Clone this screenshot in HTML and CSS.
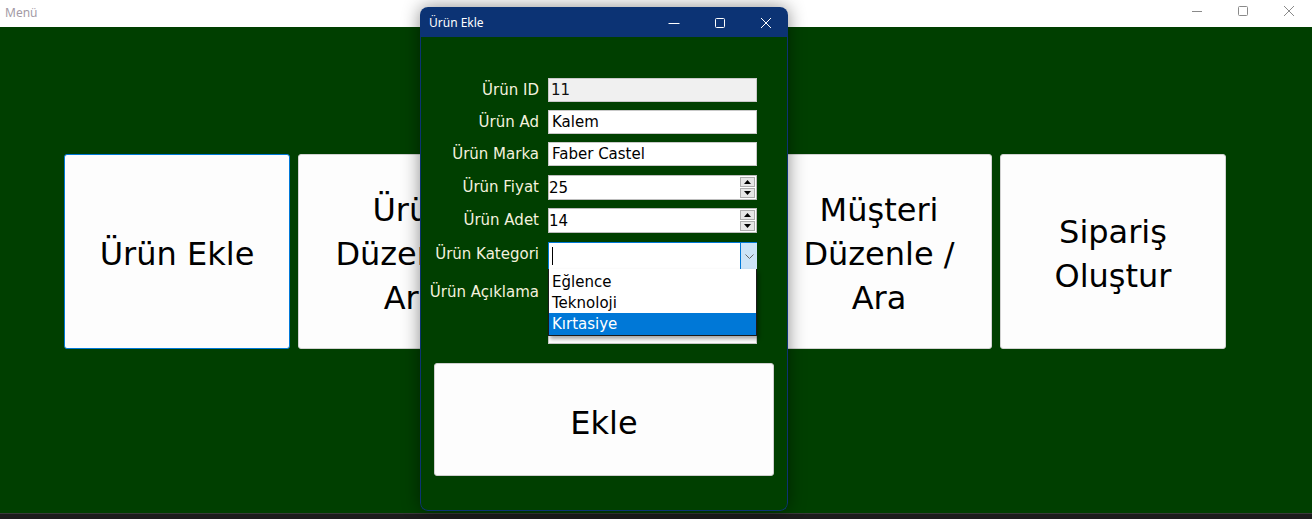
FILE: index.html
```html
<!DOCTYPE html>
<html lang="tr">
<head>
<meta charset="utf-8">
<title>Menü</title>
<link rel="stylesheet" href="styles.css">
</head>
<body>
<div class="app">
  <header class="titlebar">
    <span class="title">Menü</span>
    <div class="controls">
      <span class="ctl"><svg width="12" height="12" viewBox="0 0 12 12"><path d="M1 6.5h10" stroke="#8a8a8a" stroke-width="1"/></svg></span>
      <span class="ctl"><svg width="12" height="12" viewBox="0 0 12 12"><rect x="1.5" y="1.5" width="9" height="9" rx="1" fill="none" stroke="#8a8a8a" stroke-width="1"/></svg></span>
      <span class="ctl"><svg width="12" height="12" viewBox="0 0 12 12"><path d="M1 1l10 10M11 1L1 11" stroke="#8a8a8a" stroke-width="1"/></svg></span>
    </div>
  </header>
  <main class="main">
    <div class="menu">
      <button class="tile focused">Ürün Ekle</button>
      <button class="tile">Ürün<br>Düzenle /<br>Ara</button>
      <button class="tile">Müşteri<br>Ekle</button>
      <button class="tile">Müşteri<br>Düzenle /<br>Ara</button>
      <button class="tile">Sipariş<br>Oluştur</button>
    </div>
  </main>
  <div class="dialog">
    <div class="dlg-title">
      <span class="dlg-name">Ürün Ekle</span>
      <div class="dlg-controls">
        <span class="dctl"><svg width="12" height="12" viewBox="0 0 12 12"><path d="M0.5 6.5h11" stroke="#fff" stroke-width="1"/></svg></span>
        <span class="dctl"><svg width="12" height="12" viewBox="0 0 12 12"><rect x="1.5" y="1.5" width="9" height="9" rx="1" fill="none" stroke="#fff" stroke-width="1"/></svg></span>
        <span class="dctl"><svg width="12" height="12" viewBox="0 0 12 12"><path d="M1 1l10 10M11 1L1 11" stroke="#fff" stroke-width="1"/></svg></span>
      </div>
    </div>
    <div class="dlg-body">
      <div class="form">
        <label class="lbl">Ürün ID</label>
        <div class="field ro">11</div>
        <label class="lbl">Ürün Ad</label>
        <div class="field">Kalem</div>
        <label class="lbl">Ürün Marka</label>
        <div class="field">Faber Castel</div>
        <label class="lbl">Ürün Fiyat</label>
        <div class="field spin"><span class="val">25</span><span class="spinbtns"><span class="sb"><svg width="7" height="4" viewBox="0 0 7 4"><path d="M3.5 0L7 4H0z" fill="#000"/></svg></span><span class="sb"><svg width="7" height="4" viewBox="0 0 7 4"><path d="M0 0h7L3.5 4z" fill="#000"/></svg></span></span></div>
        <label class="lbl">Ürün Adet</label>
        <div class="field spin"><span class="val">14</span><span class="spinbtns"><span class="sb"><svg width="7" height="4" viewBox="0 0 7 4"><path d="M3.5 0L7 4H0z" fill="#000"/></svg></span><span class="sb"><svg width="7" height="4" viewBox="0 0 7 4"><path d="M0 0h7L3.5 4z" fill="#000"/></svg></span></span></div>
        <label class="lbl">Ürün Kategori</label>
        <div class="combo-wrap">
          <div class="field combo"><span class="caret"></span><span class="drop"><svg width="9" height="5" viewBox="0 0 9 5"><path d="M0.5 0.5L4.5 4.5L8.5 0.5" fill="none" stroke="#666" stroke-width="1"/></svg></span></div>
          <ul class="list">
            <li>Eğlence</li>
            <li>Teknoloji</li>
            <li class="sel">Kırtasiye</li>
          </ul>
        </div>
        <label class="lbl top">Ürün Açıklama</label>
        <div class="field area"></div>
      </div>
      <button class="ekle">Ekle</button>
    </div>
  </div>
</div>
</body>
</html>
```
FILE: styles.css
```css
* { box-sizing: border-box; }
html, body { margin: 0; padding: 0; }
body { width: 1312px; height: 519px; overflow: hidden; background: #1c1c1c; font-family: "DejaVu Sans", sans-serif; }
.app { position: relative; width: 1312px; height: 519px; }

.titlebar { height: 27px; background: #fff; display: flex; align-items: center; justify-content: space-between; }
.title { font-family: "Noto Sans", "Open Sans", sans-serif; font-size: 12px; color: #a39aa5; padding-left: 5px; margin-top: -2px; }
.controls { display: flex; height: 27px; }
.ctl { width: 46px; display: flex; align-items: center; justify-content: center; margin-top: -5px; }

.main { height: 487px; background: #003f00; border-bottom: 1px solid #3a3a3a; padding: 127px 0 0 64px; }
.menu { display: flex; gap: 8px; }
.tile { width: 226px; height: 195px; background: #fdfdfd; border: 1px solid #d2d2d2; border-radius: 3px; font-family: "DejaVu Sans", sans-serif; font-size: 32px; line-height: 44px; color: #000; padding: 4px 0 0; text-align: center; }
.tile.focused { border-color: #0078d7; }

.dialog { position: absolute; left: 420px; top: 7px; width: 368px; height: 504px; border-radius: 8px; overflow: hidden; box-shadow: 0 0 18px rgba(0,0,0,0.45); display: flex; flex-direction: column; }
.dlg-title { height: 30px; background: #0c3374; display: flex; align-items: center; justify-content: space-between; }
.dlg-name { font-family: "Noto Sans", "Open Sans", sans-serif; font-size: 12px; color: #fff; padding-left: 9px; margin-top: 1px; }
.dlg-controls { display: flex; height: 30px; }
.dctl { width: 46px; display: flex; align-items: center; justify-content: center; margin-top: 1px; }
.dctl:last-child { width: 45px; }

.dlg-body { flex: 1; background: #003f00; border: 1px solid #0c3374; border-top: 0; border-radius: 0 0 8px 8px; padding: 41px 0 0 0; }
.form { display: grid; grid-template-columns: 118px 209px; column-gap: 9px; grid-template-rows: 32px 32px 33px 33px 34px 38px 64px; align-items: start; }
.lbl { color: #f4f1de; font-size: 15px; text-align: right; line-height: 24px; }
.lbl.top { margin-top: 0; }
.field { height: 24px; background: #fff; border: 1px solid #c9c9c9; font-size: 15px; line-height: 22px; padding-left: 3px; color: #000; position: relative; }
.field.ro { background: #f0f0f0; padding-left: 2px; color: #111; }
.field.spin { height: 25px; padding-left: 0; display: flex; justify-content: space-between; border-color: #bdbdbd; }
.field.spin .val { line-height: 24px; }
.spinbtns { display: flex; flex-direction: column; gap: 1px; padding: 1px 1px 0 0; }
.sb { width: 15px; height: 10px; background: #e6e6e6; border: 1px solid #adadad; display: flex; align-items: center; justify-content: center; }

.combo-wrap { position: relative; }
.field.combo { height: 28px; border-color: #0078d7; padding-left: 3px; display: flex; justify-content: space-between; align-items: center; }
.caret { width: 1px; height: 18px; background: #000; }
.drop { width: 17px; height: 26px; background: #cce4f7; border-left: 1px solid #0078d7; display: flex; align-items: center; justify-content: center; margin-right: -1px; }
.list { position: absolute; left: 0; top: 27px; width: 209px; margin: 0; padding: 2px 0 0; list-style: none; background: #fff; border: 1px solid #1a1a1a; border-top: 0; box-shadow: 2px 3px 4px rgba(0,0,0,0.35); z-index: 2; }
.list li { height: 21px; font-size: 15px; line-height: 19px; padding: 2px 0 0 3px; color: #000; }
.list li.sel { background: #0078d7; color: #fff; height: 22px; }
.field.area { height: 64px; margin-top: 0; }

.ekle { display: block; margin: 19px 0 0 13px; width: 340px; height: 113px; background: #fdfdfd; border: 1px solid #cfcfcf; border-radius: 3px; font-family: "DejaVu Sans", sans-serif; font-size: 32px; color: #000; padding: 6px 0 0; }
```
